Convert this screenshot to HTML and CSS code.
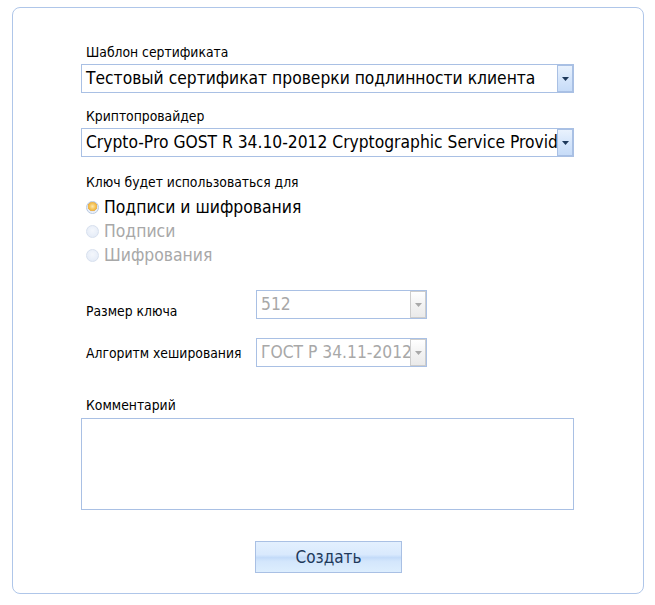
FILE: index.html
```html
<!DOCTYPE html>
<html lang="ru">
<head>
<meta charset="utf-8">
<title>Создание сертификата</title>
<link rel="stylesheet" href="styles.css">
</head>
<body>
<div class="panel">
  <div class="form">
    <div class="label">Шаблон сертификата</div>
    <div class="combo combo-wide gap4">
      <span class="combo-text">Тестовый сертификат проверки подлинности клиента</span>
      <span class="combo-btn"><svg width="7" height="4" viewBox="0 0 7 4"><path d="M0 0h7L3.5 4z" fill="#1e395b"/></svg></span>
    </div>

    <div class="label gap15">Криптопровайдер</div>
    <div class="combo combo-wide gap4">
      <span class="combo-text">Crypto-Pro GOST R 34.10-2012 Cryptographic Service Provider</span>
      <span class="combo-btn"><svg width="7" height="4" viewBox="0 0 7 4"><path d="M0 0h7L3.5 4z" fill="#1e395b"/></svg></span>
    </div>

    <div class="label gap17">Ключ будет использоваться для</div>
    <div class="radios">
      <div class="radio-row"><span class="radio radio-on"></span><span class="radio-text">Подписи и шифрования</span></div>
      <div class="radio-row disabled"><span class="radio"></span><span class="radio-text">Подписи</span></div>
      <div class="radio-row disabled"><span class="radio"></span><span class="radio-text">Шифрования</span></div>
    </div>

    <div class="field-row row-end gap23">
      <div class="label field-label">Размер ключа</div>
      <div class="combo combo-small combo-disabled">
        <span class="combo-text">512</span>
        <span class="combo-btn"><svg width="7" height="4" viewBox="0 0 7 4"><path d="M0 0h7L3.5 4z" fill="#a9a9a9"/></svg></span>
      </div>
    </div>
    <div class="field-row row-center gap19">
      <div class="label field-label">Алгоритм хеширования</div>
      <div class="combo combo-small combo-disabled">
        <span class="combo-text">ГОСТ Р 34.11-2012</span>
        <span class="combo-btn"><svg width="7" height="4" viewBox="0 0 7 4"><path d="M0 0h7L3.5 4z" fill="#a9a9a9"/></svg></span>
      </div>
    </div>

    <div class="label gap30">Комментарий</div>
    <div class="memo gap5"></div>

    <div class="button-row">
      <div class="button">Создать</div>
    </div>
  </div>
</div>
</body>
</html>
```

FILE: styles.css
```css
html, body {
  margin: 0;
  padding: 0;
  background: #ffffff;
}

body {
  font-family: "DejaVu Sans Condensed", "DejaVu Sans", sans-serif;
  color: #000000;
}

.panel {
  margin: 7px 0 0 12px;
  width: 632px;
  height: 587px;
  box-sizing: border-box;
  border: 1px solid #afc6e9;
  border-radius: 8px;
  padding: 36px 0 0 68px;
}

.form {
  width: 493px;
  display: flex;
  flex-direction: column;
}

.label {
  font-size: 13.8px;
  line-height: 16px;
  height: 16px;
  white-space: nowrap;
  padding-left: 5px;
}

.gap4 { margin-top: 4px; }
.gap5 { margin-top: 5px; }
.gap15 { margin-top: 15px; }
.gap17 { margin-top: 17px; }
.gap19 { margin-top: 19px; }
.gap23 { margin-top: 23px; }
.gap30 { margin-top: 30px; }

.combo {
  box-sizing: border-box;
  height: 29px;
  border: 1px solid #a9c0e4;
  display: flex;
  align-items: stretch;
  background: #ffffff;
  overflow: hidden;
}

.combo-wide { width: 493px; }

.combo-small { width: 171px; }

.combo-text {
  flex: 1;
  min-width: 0;
  overflow: hidden;
  white-space: nowrap;
  font-size: 17.3px;
  line-height: 27px;
  padding-left: 4px;
}

.combo-btn {
  flex: none;
  width: 16px;
  margin: 0;
  box-sizing: border-box;
  border: 1px solid #a9c0e4;
  background: linear-gradient(#e9f2fd, #d6e6fb 50%, #c7dcf8);
  display: flex;
  align-items: center;
  justify-content: center;
}

.combo-disabled .combo-text {
  color: #a8a8a8;
}

.combo-disabled .combo-btn {
  border-color: #cdcdcd;
  background: linear-gradient(#ffffff, #f3f3f3 50%, #eaeaea);
}

.radios {
  margin-top: 5px;
  display: flex;
  flex-direction: column;
}

.radio-row {
  height: 24px;
  display: flex;
  align-items: center;
  gap: 5px;
  padding-left: 5px;
}

.radio {
  flex: none;
  width: 13px;
  height: 13px;
  box-sizing: border-box;
  border-radius: 50%;
  border: 1px solid #d7e0ee;
  background: radial-gradient(circle at 50% 40%, #f4f7fc, #e1e9f6);
}

.radio-on {
  border: 1px solid #b8c9e1;
  background: radial-gradient(circle at 50% 40%, #fde8b0 0, #f5c355 3px, #eab04a 4.5px, #dfe7f3 5px, #eef2f9 6px);
}

.radio-text {
  font-size: 17.4px;
  line-height: 20px;
  white-space: nowrap;
}

.disabled .radio-text {
  color: #a8a8a8;
}

.field-row {
  display: flex;
}

.row-end { align-items: flex-end; }
.row-center { align-items: center; }

.field-label {
  width: 170px;
  flex: none;
}

.memo {
  box-sizing: border-box;
  width: 493px;
  height: 92px;
  border: 1px solid #a9c0e4;
}

.button-row {
  margin-top: 31px;
  padding-left: 174px;
  display: flex;
}

.button {
  box-sizing: border-box;
  width: 147px;
  height: 32px;
  border: 1px solid #a9c0e4;
  background: linear-gradient(#e3f0fe 0, #d9e9fd 42%, #c3dbf9 52%, #d3e6fc 64%, #ddeefe 100%);
  color: #1e395b;
  font-size: 17px;
  line-height: 30px;
  text-align: center;
}
```
